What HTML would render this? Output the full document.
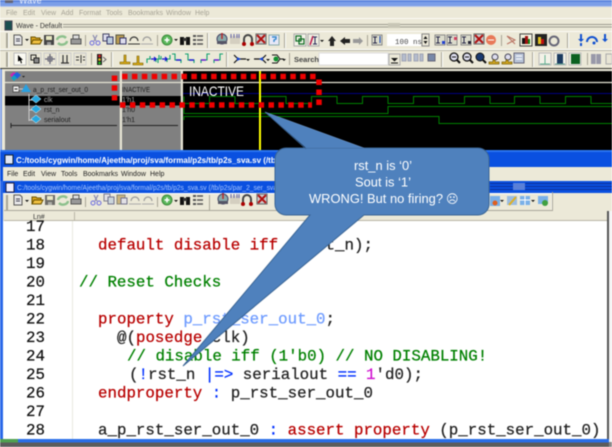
<!DOCTYPE html>
<html><head><meta charset="utf-8"><style>
html,body{margin:0;padding:0;background:#fff;width:612px;height:447px;overflow:hidden}
svg{display:block;filter:blur(.45px)}
.u{font-family:"Liberation Sans",sans-serif}
.m{font-family:"Liberation Mono",monospace;font-size:15.8px;stroke-width:.25px}
.k{fill:#b80000;stroke:#b80000}.b{fill:#222;stroke:#222}.g{fill:#008000;stroke:#008000}.c{fill:#0030ff;stroke:#0030ff}.l{fill:#6f9cff;stroke:#6f9cff}.p{fill:#d010d0;stroke:#d010d0}
.n{font-family:"Liberation Mono",monospace;font-size:15.8px;fill:#111;stroke:#111;stroke-width:.2px}
</style></head><body>
<svg width="612" height="447" viewBox="0 0 612 447" xmlns="http://www.w3.org/2000/svg" xml:space="preserve">
<defs>
<g id="doc"><path d="M-4-5h6l2 2v8h-8z" fill="#e8e8e8" stroke="#555"/><path d="M-2-1h4M-2 1h4" stroke="#445"/></g>
<path id="dd" d="M-2-1h4l-2 2z" fill="#111"/>
<g id="open"><path d="M-5 4v-7h4l1 1h4v6z" fill="#d9a520" stroke="#6b5200"/><path d="M-5 4l2-4h9l-2 4z" fill="#f0c040" stroke="#6b5200"/></g>
<g id="save"><rect x="-5" y="-5" width="10" height="10" fill="#444"/><rect x="-3" y="-4" width="6" height="4" fill="#e8e8c0"/><rect x="-2" y="2" width="4" height="3" fill="#999"/></g>
<g id="rec"><path d="M-5 0a5 4 0 0 1 9-2M5 1a5 4 0 0 1-9 2" fill="none" stroke="#8cc08c" stroke-width="2.4"/></g>
<g id="print"><rect x="-5" y="-1" width="10" height="5" fill="#999" stroke="#555"/><rect x="-3" y="-5" width="6" height="4" fill="#ddd" stroke="#555"/></g>
<g id="cut"><path d="M-2-5l3 6M2-5l-3 6" stroke="#8a8ab0" stroke-width="1.2"/><circle cx="-3" cy="3" r="2" fill="none" stroke="#6a6ae0"/><circle cx="3" cy="3" r="2" fill="none" stroke="#6a6ae0"/></g>
<g id="copy"><rect x="-5" y="-5" width="6" height="7" fill="#dde" stroke="#446"/><rect x="-1" y="-2" width="6" height="7" fill="#bcd" stroke="#336"/></g>
<g id="paste"><rect x="-5" y="-4" width="8" height="9" fill="#b89a50" stroke="#554"/><rect x="-1" y="-1" width="6" height="6" fill="#dde" stroke="#336"/></g>
<g id="undo"><path d="M-4 1a4 4 0 1 1 8 0" fill="none" stroke="#333" stroke-width="1.2"/><path d="M-6 4h12" stroke="#333"/></g>
<g id="redo"><path d="M-4 1a4 4 0 1 1 8 0" fill="none" stroke="#999" stroke-width="1.2"/><path d="M-6 4h12" stroke="#aaa"/></g>
<g id="plus"><circle r="5" fill="#5cb85c" stroke="#3a8a3a"/><path d="M-2.500 0h5M0-2.500v5" stroke="#fff" stroke-width="1.5"/></g>
<g id="bin"><rect x="-5" y="-3" width="4" height="8" fill="#111"/><rect x="1" y="-3" width="4" height="8" fill="#111"/><rect x="-2" y="-2" width="4" height="3" fill="#333"/></g>
<g id="list"><path d="M-1-4h6M-1 0h6M-1 4h6" stroke="#555" stroke-width="1.4"/><rect x="-5" y="-5" width="3" height="2" fill="#555"/><rect x="-5" y="-1" width="3" height="2" fill="#555"/><rect x="-5" y="3" width="3" height="2" fill="#555"/></g>
<g id="t1"><circle r="5" fill="#8aa" stroke="#446"/><path d="M0-6v6" stroke="#b22" stroke-width="1.4"/><rect x="-5" y="2" width="10" height="3" fill="#556"/></g>
<g id="t2"><rect x="-5" y="-3" width="10" height="8" fill="#d4cfc0"/><path d="M-4-5v4M-1-5v4M2-5v4M4-5v4" stroke="#66a" stroke-width="1"/></g>
<g id="t3"><path d="M-4 4v-5a4 4 0 0 1 8 0v5" fill="none" stroke="#444" stroke-width="2"/><circle cx="-4" cy="4" r="2" fill="#a00"/><circle cx="4" cy="4" r="2" fill="#a00"/></g>
<g id="t4"><rect x="-5" y="-5" width="10" height="10" fill="#ccc" stroke="#666"/><path d="M-4-4l8 8M4-4l-8 8" stroke="#b01010" stroke-width="2"/></g>
<g id="t5"><rect x="-5" y="-5" width="10" height="10" fill="#e8e8f8" stroke="#8aa"/><path d="M-2-3h4v2l-2 1v2" fill="none" stroke="#38c" stroke-width="1.4"/></g>
<g id="bk"><rect x="-5" y="-5" width="10" height="10" fill="#dcdccc" stroke="#888"/></g>
<g id="sel"><rect x="-6" y="-6" width="12" height="12" fill="#fbfaf2" stroke="#bbb"/><path d="M-2-4l5 5h-2l1 3-1 .5-1-3-2 1z" fill="#000"/></g>
<g id="zbox"><rect x="-6" y="-6" width="12" height="12" fill="#e8e5d5" stroke="#ccc"/><rect x="-4" y="-4" width="5" height="5" fill="none" stroke="#222"/><rect x="-1" y="-1" width="5" height="5" fill="#888" stroke="#222"/></g>
<g id="mv"><rect x="-6" y="-6" width="12" height="12" fill="#e8e5d5" stroke="#ccc"/><path d="M0-5v10M-5 0h10" stroke="#667" stroke-width="1.3"/><rect x="-2" y="-2" width="4" height="4" fill="none" stroke="#667"/></g>
<g id="cur"><rect x="-6" y="-6" width="12" height="12" fill="#e8e5d5" stroke="#ccc"/><path d="M-2-4v8M2-4v8M-4 4h8" stroke="#333" stroke-width="1.2"/></g>
<g id="cur2"><rect x="-6" y="-6" width="12" height="12" fill="#e8e5d5" stroke="#ccc"/><path d="M1-4v8" stroke="#333"/><path d="M-4-2h3M-4 1h3M3-2h2M3 1h2" stroke="#333"/></g>
<g id="ylw"><path d="M-5 5h10v-2h-4v-7h-2v7h-4z" fill="#d8a810" stroke="#705800" stroke-width=".6"/></g>
<g id="gr1"><path d="M-6 4v-4h3v-3M6-4v4h-3v3" fill="none" stroke="#10a070" stroke-width="1.1"/><path d="M-2 0h5M1-2l2 2-2 2" fill="none" stroke="#1010d0" stroke-width="1.2"/></g>
<g id="gr2"><path d="M-5-5h3v6h6v3" fill="none" stroke="#10a070" stroke-width="1.1"/><path d="M-1 1h5" stroke="#1010d0" stroke-width="1.4"/></g>
<g id="gr3"><path d="M6-5h-3v6h-6v3" fill="none" stroke="#10a070" stroke-width="1.1"/><path d="M-3 1h5" stroke="#6010d0" stroke-width="1.4"/></g>
<g id="con"><path d="M-6-4l4 4-4 4M6 0h-8" fill="none" stroke="#111" stroke-width="1.2"/><path d="M-3-2l4 2-4 2z" fill="#1040d0"/></g>
<g id="mag"><circle cx="-1" cy="-1" r="4" fill="#dde" stroke="#111" stroke-width="1.3"/><path d="M2 2l3 3" stroke="#111" stroke-width="2"/><path d="M-3-1h4" stroke="#111"/></g>
<g id="zy"><circle cx="1" cy="-2" r="3" fill="#dde" stroke="#445"/><path d="M-5 5h10v-2h-4v-2h-2v2h-4z" fill="#e0b020" stroke="#705800" stroke-width=".7"/></g>
<g id="fld"><rect x="-5" y="-5" width="10" height="10" fill="#b8c4d8" stroke="#667"/><path d="M-3-2h6M-3 1h6" stroke="#fff"/></g>
<g id="wv"><rect x="-6" y="-6" width="12" height="12" fill="#f3f2e8" stroke="#bbb"/></g>
<path id="diam" d="M0-5l5 4-5 4-5-4z" fill="#27a8e0" stroke="#e6f6ff" stroke-width=".5"/>
<path id="arr" d="M0-5l-4 5h2v5h4v-5h2z" fill="#222"/>
</defs>

<!-- top window -->
<rect width="612" height="150" fill="#ece9d8"/>
<rect width="612" height="7" fill="#7b9ee8"/>
<rect width="612" height="2" fill="#5d85dd"/>
<rect y="6" width="612" height="1" fill="#b8c8e8"/>
<rect x="5" y="0" width="8" height="3" fill="#667"/>
<text x="19" y="3.500" class="u" font-size="9" fill="#e8eefc">Wave</text>
<g class="u" font-size="7" fill="#a6a396">
<text x="6" y="15">File</text><text x="23" y="15">Edit</text><text x="41" y="15">View</text><text x="61" y="15">Add</text><text x="79" y="15">Format</text><text x="106" y="15">Tools</text><text x="128" y="15">Bookmarks</text><text x="166" y="15">Window</text><text x="195" y="15">Help</text>
</g>
<rect y="18" width="612" height="1" fill="#fbfaf5"/>
<rect x="5" y="21" width="7" height="9" fill="#1a5050" stroke="#445"/>
<text x="16" y="28" class="u" font-size="7" fill="#333">Wave - Default</text>
<path d="M63 24.500H612M63 27H612" stroke="#9b9b8e"/>
<rect x="388" y="23" width="12" height="5" fill="#c8c6b6"/>
<rect y="31" width="612" height="1" fill="#fbfaf5"/>
<path d="M0 49.500H612" stroke="#fff"/><path d="M0 50.500H612" stroke="#b9b6a6"/>
<path d="M0 68.500H612" stroke="#33332c"/>
<!-- gripper/separators -->
<g stroke="#a8a596" fill="none">
<path d="M6.500 33v15M7.500 33v15M207.500 33v15M284.500 33v15M567.500 33v15M85.500 35v11M157.500 35v11M367.500 35v11M501.500 35v11"/>
<path d="M6.500 52v15M7.500 52v15M111.500 52v15M226.500 52v15M441.500 52v15M532.500 52v15M91.500 53v12M289.500 53v12M587.500 53v12"/>
</g>
<path d="M8.500 33v15M208.500 33v15M285.500 33v15M568.500 33v15M8.500 52v15M112.500 52v15M227.500 52v15M442.500 52v15M533.500 52v15" stroke="#fff"/>
<!-- row 1 icons -->
<use href="#doc" x="18" y="40"/><use href="#dd" x="27" y="40"/><use href="#open" x="36" y="40"/><use href="#save" x="49" y="40"/><use href="#rec" x="62" y="40"/><use href="#print" x="76" y="40"/><use href="#cut" x="95" y="40"/><use href="#copy" x="108" y="39"/><use href="#paste" x="121" y="39"/><use href="#undo" x="134" y="40"/><use href="#redo" x="147" y="40"/><use href="#plus" x="167" y="40"/><use href="#dd" x="176" y="40"/><use href="#bin" x="185" y="40"/><use href="#list" x="198" y="40"/>
<use href="#t1" x="222" y="39"/><use href="#t2" x="235" y="39"/><use href="#t3" x="248" y="40"/><use href="#t4" x="261" y="39"/><use href="#t5" x="274" y="40"/>
<rect x="294" y="34" width="12" height="12" fill="#f4f3e8" stroke="#aaa"/><rect x="296" y="36" width="5" height="5" fill="none" stroke="#0a6a20" stroke-width="1.2"/><rect x="299" y="39" width="5" height="5" fill="none" stroke="#0a6a20" stroke-width="1.2"/>
<rect x="308" y="34" width="11" height="12" fill="#eeeee0" stroke="#aaa"/><path d="M310 45l3-9" stroke="#c02050" stroke-width="1.6"/><path d="M313 37h4M315 37v7M313 44h4" stroke="#225"/>
<use href="#dd" x="322" y="41"/><use href="#arr" x="332" y="41"/><use href="#arr" transform="translate(345 41) rotate(-90)"/><path d="M353 39h6v-2l4 4-4 4v-2h-6z" fill="#999"/>
<use href="#bk" x="377" y="40"/><path d="M375 37v6M373 37h4M373 43h4" stroke="#224"/><path d="M380 36v7" stroke="#1040b0"/>
<rect x="387" y="34" width="34" height="12" fill="#fff"/>
<text x="395" y="44" font-family="Liberation Mono,monospace" font-size="7.500" fill="#444">100 ns</text>
<rect x="422" y="34" width="7" height="12" fill="#ece9d8" stroke="#888"/><path d="M425.500 36l-2 3h4zM425.500 44l-2-3h4z" fill="#111"/>
<use href="#bk" x="440" y="40"/><path d="M438 37v6M436 37h4M436 43h4" stroke="#224"/><rect x="442" y="41" width="3" height="3" fill="#2040d0"/>
<use href="#bk" x="452" y="40"/><path d="M450 37v6M448 37h4M448 43h4" stroke="#224"/><rect x="454" y="37" width="3" height="3" fill="#d04060"/>
<use href="#bk" x="466" y="40"/><path d="M464 37v6M462 37h4M462 43h4" stroke="#224"/><rect x="468" y="41" width="3" height="3" fill="#223"/>
<use href="#t4" x="479" y="39"/><circle cx="491" cy="40" r="5" fill="#e87858"/><path d="M488 40h6" stroke="#fff"/>
<path d="M507 36l8 4-8 4M507 36l8 8" fill="none" stroke="#b87060"/>
<rect x="520" y="34" width="12" height="12" fill="#f4f3e0" stroke="#444"/><rect x="522" y="38" width="3" height="6" fill="#111"/><rect x="525" y="36" width="3" height="8" fill="#a01010"/><rect x="528" y="39" width="2" height="5" fill="#108010"/>
<rect x="535" y="34" width="12" height="12" fill="#222"/><rect x="538" y="37" width="3" height="7" fill="#e0c020"/><rect x="541" y="39" width="3" height="5" fill="#c01010"/>
<circle cx="554" cy="41" r="4.500" fill="none" stroke="#667" stroke-width="2"/>
<path d="M580 34v5h-2l3 3 3-3h-2v-5zM580 43h2v3h-2z" fill="#1050d0"/>
<path d="M587 42a5 5 0 0 1 10 0" fill="none" stroke="#1050d0" stroke-width="2"/><circle cx="594" cy="43" r="1.500" fill="#1050d0"/>
<path d="M604 34v5h-2l3 3 3-3h-2v-5z" fill="#1050d0"/>
<!-- row 2 icons -->
<use href="#sel" x="20" y="59"/><use href="#zbox" x="35" y="59"/><use href="#mv" x="50" y="59"/><use href="#cur" x="65" y="59"/><use href="#cur2" x="80" y="59"/>
<rect x="97" y="54" width="5" height="11" fill="#222"/><circle cx="99.500" cy="56" r="1.300" fill="#e02020"/><circle cx="99.500" cy="59.500" r="1.300" fill="#e0c020"/><circle cx="99.500" cy="63" r="1.300" fill="#20c020"/><path d="M103 57l3 2.500-3 2.500" fill="none" stroke="#666"/>
<use href="#ylw" x="125" y="59"/><use href="#ylw" x="138" y="60"/>
<use href="#gr1" x="153" y="59"/><use href="#gr1" x="164" y="59"/><use href="#gr2" x="177" y="59"/><use href="#gr2" x="190" y="59"/><use href="#gr3" x="204" y="59"/><use href="#gr3" x="217" y="59"/>
<use href="#con" x="240" y="59"/><use href="#dd" x="248" y="60"/><g transform="translate(260 59) scale(-1 1)"><use href="#con"/></g><use href="#dd" x="268" y="60"/><path d="M272 55h5l3 4-3 4h-5M280 59h4" fill="none" stroke="#111"/><circle cx="276" cy="59" r="2.500" fill="#109030"/><use href="#dd" x="284" y="60"/>
<text x="294" y="62" class="u" font-size="7.500" font-weight="bold" fill="#444">Search:</text>
<rect x="319" y="53" width="69" height="12" fill="#fff" stroke="#ddd"/>
<rect x="389" y="54" width="11" height="11" fill="#ece9d8" stroke="#aaa"/><path d="M391 58h7l-3.500 3.500z" fill="#111"/><path d="M391 63h7" stroke="#111"/>
<g fill="#b4bccd" stroke="#a0a4b4"><rect x="402" y="54" width="4" height="7"/><rect x="408" y="54" width="3" height="7"/><rect x="414" y="54" width="4" height="7"/><rect x="420" y="54" width="3" height="7"/></g><rect x="428" y="54" width="7" height="7" fill="#7788a8" stroke="#667"/>
<use href="#mag" x="455" y="58"/><use href="#mag" x="468" y="58"/><circle cx="480" cy="57" r="4" fill="#1a3a70" stroke="#111"/><path d="M483 60l3 3" stroke="#111" stroke-width="2"/>
<use href="#zy" x="494" y="59"/><use href="#zy" x="507" y="59"/><use href="#fld" x="519" y="58"/>
<use href="#wv" x="545" y="59"/><path d="M540 64h10M545 55v9" stroke="#60b090" stroke-width="1"/>
<use href="#wv" x="560" y="59"/><rect x="557" y="54" width="6" height="10" fill="#1a3a60"/><path d="M555 64h10" stroke="#60a090"/>
<use href="#wv" x="575" y="59"/><rect x="571" y="54" width="9" height="10" fill="#0b6020"/>
<rect x="591" y="54" width="10" height="10" fill="#9898a8"/><path d="M596 54v10" stroke="#ccc"/>
<rect x="606" y="54" width="6" height="10" fill="#e8e5d5" stroke="#aaa"/>

<!-- wave area -->
<rect x="0" y="69" width="612" height="81" fill="#ece9d8"/>
<rect x="0" y="69" width="2" height="81" fill="#7f9fe4"/>
<rect x="5" y="70" width="115" height="80" fill="#808080"/>
<rect x="122" y="70" width="59" height="80" fill="#808080"/>
<rect x="183" y="70" width="429" height="80" fill="#000"/>
<path d="M5 82.500H612M5 70.500H612" stroke="#e6e4d4" stroke-width="1.200"/>
<rect x="5" y="96" width="115" height="9.500" fill="#000"/>
<rect x="122" y="96" width="59" height="9.500" fill="#000"/>
<path d="M120.500 70v80M181.500 70v80" stroke="#e6e4d4" stroke-width="1.500"/>
<path d="M11 125.500h106M123 125.500h55" stroke="#222"/>
<path d="M11 123v5" stroke="#222"/>
<!-- signal header icon -->
<path d="M14 72l4 3-4 4-4-4z" fill="#d020b0"/><path d="M17 72l4 3-4 4-4-4z" fill="#2060e0"/><path d="M14 75l3 3-3 3-3-3z" fill="#10a0c0"/><path d="M22 76h3l-1.500 1.500z" fill="#111"/>
<!-- tree -->
<rect x="13" y="86" width="6" height="6" fill="#eee" stroke="#333" stroke-width=".7"/><path d="M14.500 89h3" stroke="#222"/>
<path d="M19 89h4M29 94v27M29 100h4M29 110h4M29 120h4" stroke="#ccc" fill="none"/>
<path d="M26 84l5 8h-10z" fill="#2aa0e0"/>
<use href="#diam" x="36" y="100"/><use href="#diam" x="36" y="110"/><use href="#diam" x="36" y="120"/>
<g class="u" font-size="7" fill="#1e1e1e">
<text x="33" y="92" textLength="55" lengthAdjust="spacingAndGlyphs">a_p_rst_ser_out_0</text>
<text x="44" y="102" fill="#aaa">clk</text>
<text x="44" y="112">rst_n</text>
<text x="44" y="122">serialout</text>
<text x="122" y="92" textLength="28" lengthAdjust="spacingAndGlyphs">INACTIVE</text>
<text x="122" y="102" fill="#aaa">1'h1</text>
<text x="122" y="112">1'h0</text>
<text x="122" y="122">1'h1</text>
</g>
<text x="168" y="79" class="u" font-size="7" fill="#888">1ns</text>
<!-- waves -->
<path d="M183 93.500H612" stroke="#000080"/>
<path d="M184 96.500V103.500H209.500V96.500H235V103.500H260.500V96.500H286V103.500H311.500V96.500H337V103.500H362.500V96.500H388V103.500H413.500V96.500H439V103.500H464.500V96.500H490V103.500H514.500V96.500H540V103.500H565.500V96.500H591V103.500H612" fill="none" stroke="#008000"/>
<path d="M184 106V113.500H388V106.500H612" fill="none" stroke="#008000"/>
<path d="M184 120V116.500H439V123.500H612" fill="none" stroke="#008000"/>
<path d="M260 71V150" stroke="#ffff00" stroke-width="2"/>
<text x="189" y="96" class="u" font-size="14" fill="#fff" textLength="55" lengthAdjust="spacingAndGlyphs">INACTIVE</text>
<!-- red dashes -->
<path d="M122 76.500H316" stroke="#f00000" stroke-width="5.500" stroke-dasharray="5.500 4.400"/>
<path d="M120 105H312" stroke="#f00000" stroke-width="5.500" stroke-dasharray="5.500 4.400"/>
<path d="M114.500 75.500V100.500" stroke="#f00000" stroke-width="5.500" stroke-dasharray="5.500 4.300"/>
<path d="M319 79.500V105" stroke="#f00000" stroke-width="5.500" stroke-dasharray="5.500 4.500"/>

<!-- second window -->
<rect x="0" y="150" width="612" height="297" fill="#ece9d8"/>
<rect x="0" y="150" width="612" height="17" fill="#0a50e0"/>
<rect x="0" y="150" width="612" height="2" fill="#2a74f0"/>
<rect x="5" y="155" width="8" height="9" fill="#dfe6f4" stroke="#123"/>
<text x="16" y="163" class="u" font-size="8.500" font-weight="bold" fill="#fff" textLength="262" lengthAdjust="spacingAndGlyphs">C:/tools/cygwin/home/Ajeetha/proj/sva/formal/p2s/tb/p2s_sva.sv (/tb/</text>
<g class="u" font-size="7" fill="#222">
<text x="7" y="176">File</text><text x="23" y="176">Edit</text><text x="41" y="176">View</text><text x="61" y="176">Tools</text><text x="83" y="176">Bookmarks</text><text x="121" y="176">Window</text><text x="150" y="176">Help</text>
</g>
<rect x="0" y="181" width="612" height="12" fill="#0a50e0"/>
<path d="M490 183.500H612M490 186.500H612M490 189.500H612" stroke="#0b2f9a"/>
<rect x="513" y="183" width="12" height="7" fill="#5a80d8"/>
<rect x="6" y="183" width="8" height="9" fill="#eef" stroke="#224"/>
<text x="17" y="190" class="u" font-size="7" fill="#aac8ff" textLength="260" lengthAdjust="spacingAndGlyphs">C:/tools/cygwin/home/Ajeetha/proj/sva/formal/p2s/tb/p2s_sva.sv (/tb/p2s/par_2_ser_sva</text>
<path d="M4 193.500H552M552 193v18M4 211.500H552" stroke="#fff"/>
<path d="M552.500 192v19M4 210.500H552" stroke="#aaa79a"/>
<path d="M6.500 195v15M7.500 195v15M209.500 195v15M85.500 197v10M157.500 197v10" stroke="#a8a596"/>
<use href="#doc" x="18" y="200"/><use href="#dd" x="27" y="201"/><use href="#open" x="37" y="200"/><use href="#save" x="50" y="200" opacity=".75"/><use href="#rec" x="63" y="200"/><use href="#print" x="76" y="200"/><use href="#cut" x="96" y="200"/><use href="#copy" x="109" y="199" opacity=".65"/><use href="#paste" x="122" y="199" opacity=".65"/><use href="#redo" x="135" y="200"/><use href="#redo" x="148" y="200"/><use href="#plus" x="167" y="200"/><use href="#dd" x="176" y="201"/><use href="#bin" x="185" y="200"/><use href="#list" x="198" y="200"/>
<use href="#t1" x="223" y="199"/><use href="#t2" x="235" y="199"/><use href="#t3" x="247" y="200"/><use href="#t4" x="262" y="199"/>
<rect x="490" y="196" width="10" height="10" fill="#7ab0e8"/><circle cx="495" cy="203" r="2.500" fill="#e06020"/><use href="#dd" x="502" y="201"/>
<rect x="507" y="196" width="10" height="9" fill="#9bbce0"/><path d="M509 205l7-8" stroke="#e0b020" stroke-width="2"/>
<rect x="520" y="196" width="10" height="9" fill="#7ab0e8"/><path d="M520 200h10M525 196v9" stroke="#fff"/><use href="#dd" x="533" y="201"/>
<rect x="538" y="196" width="10" height="8" fill="#7ab0e8"/><circle cx="545" cy="203" r="3" fill="#40a040"/>
<rect x="4" y="211" width="603" height="10" fill="#ece9d8"/>
<text x="33" y="219" class="u" font-size="7" fill="#333">Ln#</text>
<path d="M74.500 212v9M4 220.500H607" stroke="#b8b5a6"/>
<rect x="0" y="221" width="607" height="218" fill="#fff"/>
<rect x="0" y="167" width="3" height="272" fill="#0a50e0"/>
<rect x="0" y="181" width="3" height="258" fill="#2a68e8"/>
<path d="M72.500 221V439" stroke="#e8e8e0"/>
<rect x="607" y="211" width="2" height="232" fill="#555"/>
<rect x="609" y="211" width="3" height="236" fill="#f4f4f4"/>
<rect x="0" y="439" width="609" height="3.500" fill="#2a6ee8"/>
<rect x="0" y="439" width="18" height="3.500" fill="#50a050"/>
<rect x="0" y="442.500" width="612" height="4.500" fill="#5c5c5c"/>
<rect x="609" y="442" width="3" height="5" fill="#888"/>

<!-- code -->
<g class="n">
<text x="26" y="231">17</text><text x="26" y="249.500">18</text><text x="26" y="268">19</text><text x="26" y="286.500">20</text><text x="26" y="305">21</text><text x="26" y="323.500">22</text><text x="26" y="342">23</text><text x="26" y="360.500">24</text><text x="26" y="379">25</text><text x="26" y="397.500">26</text><text x="26" y="416">27</text><text x="26" y="434.500">28</text>
</g>
<g class="m">
<text x="98" y="249.500" xml:space="preserve"><tspan class="k">default disable iff</tspan><tspan class="b"> </tspan><tspan class="b">(</tspan><tspan class="c">!</tspan><tspan class="b">rst_n);</tspan></text>
<text x="79" y="286.500" class="g">// Reset Checks</text>
<text x="98" y="323.500" xml:space="preserve"><tspan class="k">property</tspan><tspan class="b"> </tspan><tspan class="l">p_rst_ser_out_0</tspan><tspan class="b">;</tspan></text>
<text x="117" y="342"><tspan class="b">@(</tspan><tspan class="k">posedge</tspan><tspan class="b"> clk)</tspan></text>
<text x="127" y="360.500" class="g">// disable iff (1'b0) // NO DISABLING!</text>
<text x="129" y="379" xml:space="preserve"><tspan class="b">(</tspan><tspan class="c">!</tspan><tspan class="b">rst_n </tspan><tspan class="c">|=&gt;</tspan><tspan class="b"> serialout </tspan><tspan class="c">==</tspan><tspan class="b"> </tspan><tspan class="p">1</tspan><tspan class="b">'d0);</tspan></text>
<text x="98" y="397.500" xml:space="preserve"><tspan class="k">endproperty</tspan><tspan class="b"> </tspan><tspan class="c">:</tspan><tspan class="b"> p_rst_ser_out_0</tspan></text>
<text x="98" y="434.500" xml:space="preserve"><tspan class="b">a_p_rst_ser_out_0 </tspan><tspan class="c">:</tspan><tspan class="b"> </tspan><tspan class="k">assert property</tspan><tspan class="b"> (p_rst_ser_out_0)</tspan></text>
</g>

<!-- callout -->
<path d="M286 148H478A11 11 0 0 1 489 159V204A11 11 0 0 1 478 215H364L183 366L310 215H286A11 11 0 0 1 275 204V159A11 11 0 0 1 286 148Z" fill="#4f81bd" stroke="#3a6595" stroke-width="1"/>
<path d="M265 112L364 148H306Z" fill="#4f81bd"/>
<path d="M265 112L306 149" stroke="#3a6595" stroke-width=".8" fill="none"/>
<path d="M265 112L364 148" stroke="#6a94c8" stroke-width=".6" fill="none"/>
<g class="u" font-size="13" fill="#fff">
<text x="354" y="170" textLength="58" lengthAdjust="spacingAndGlyphs">rst_n is ‘0’</text>
<text x="355" y="186.500" textLength="56" lengthAdjust="spacingAndGlyphs">Sout is ‘1’</text>
<text x="309" y="203" textLength="134" lengthAdjust="spacingAndGlyphs">WRONG! But no firing?</text>
<text x="446" y="203" font-family="DejaVu Sans,sans-serif" font-size="12">☹</text>
</g>
</svg>
</body></html>
